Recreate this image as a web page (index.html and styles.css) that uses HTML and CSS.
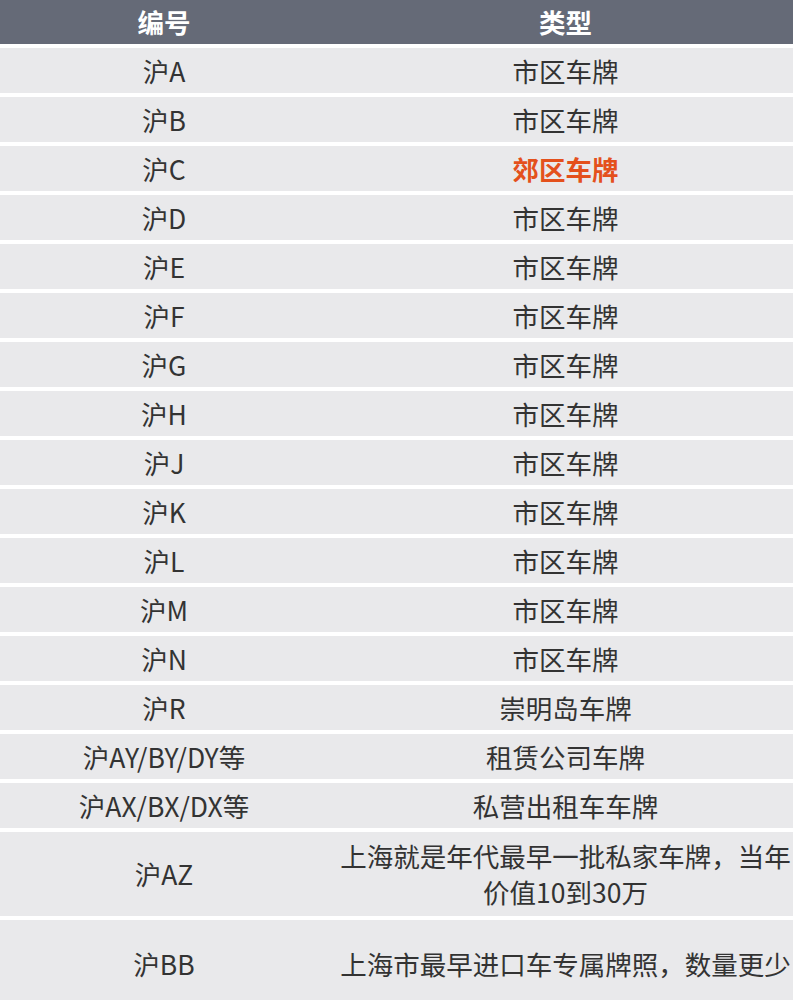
FILE: index.html
```html
<!DOCTYPE html>
<html lang="zh">
<head>
<meta charset="utf-8">
<link rel="stylesheet" href="styles.css">
</head>
<body>
<div class="table">
  <div class="row head"><div class="cell">编号</div><div class="cell">类型</div></div>
  <div class="row"><div class="cell">沪A</div><div class="cell">市区车牌</div></div>
  <div class="row"><div class="cell">沪B</div><div class="cell">市区车牌</div></div>
  <div class="row"><div class="cell">沪C</div><div class="cell hl">郊区车牌</div></div>
  <div class="row"><div class="cell">沪D</div><div class="cell">市区车牌</div></div>
  <div class="row"><div class="cell">沪E</div><div class="cell">市区车牌</div></div>
  <div class="row"><div class="cell">沪F</div><div class="cell">市区车牌</div></div>
  <div class="row"><div class="cell">沪G</div><div class="cell">市区车牌</div></div>
  <div class="row"><div class="cell">沪H</div><div class="cell">市区车牌</div></div>
  <div class="row"><div class="cell">沪J</div><div class="cell">市区车牌</div></div>
  <div class="row"><div class="cell">沪K</div><div class="cell">市区车牌</div></div>
  <div class="row"><div class="cell">沪L</div><div class="cell">市区车牌</div></div>
  <div class="row"><div class="cell">沪M</div><div class="cell">市区车牌</div></div>
  <div class="row"><div class="cell">沪N</div><div class="cell">市区车牌</div></div>
  <div class="row"><div class="cell">沪R</div><div class="cell">崇明岛车牌</div></div>
  <div class="row"><div class="cell">沪AY/BY/DY等</div><div class="cell">租赁公司车牌</div></div>
  <div class="row"><div class="cell">沪AX/BX/DX等</div><div class="cell">私营出租车车牌</div></div>
  <div class="row tall"><div class="cell">沪AZ</div><div class="cell">上海就是年代最早一批私家车牌，当年<br>价值10到30万</div></div>
  <div class="row taller"><div class="cell">沪BB</div><div class="cell">上海市最早进口车专属牌照，数量更少</div></div>
</div>
</body>
</html>
```

FILE: styles.css
```css
html, body {
  margin: 0;
  padding: 0;
  background: #ffffff;
}
body {
  font-family: "Noto Sans CJK SC", "Noto Sans", sans-serif;
  color: #333333;
}
.table {
  width: 793px;
  display: flex;
  flex-direction: column;
  gap: 4px;
}
.row {
  display: grid;
  grid-template-columns: 328px 465px;
  height: 45px;
  background: #e9e9eb;
}
.row.head {
  height: 44px;
  background: #656a77;
  color: #ffffff;
  font-weight: 700;
}
.row.tall {
  height: 84px;
}
.row.taller {
  height: 88px;
}
.cell {
  display: flex;
  align-items: center;
  justify-content: center;
  text-align: center;
  font-size: 26.5px;
  line-height: 36px;
  padding: 0 0 0 0;
}
.cell + .cell {
  padding-left: 10px;
}
.cell.hl {
  color: #e4501c;
  font-weight: 700;
}
```
